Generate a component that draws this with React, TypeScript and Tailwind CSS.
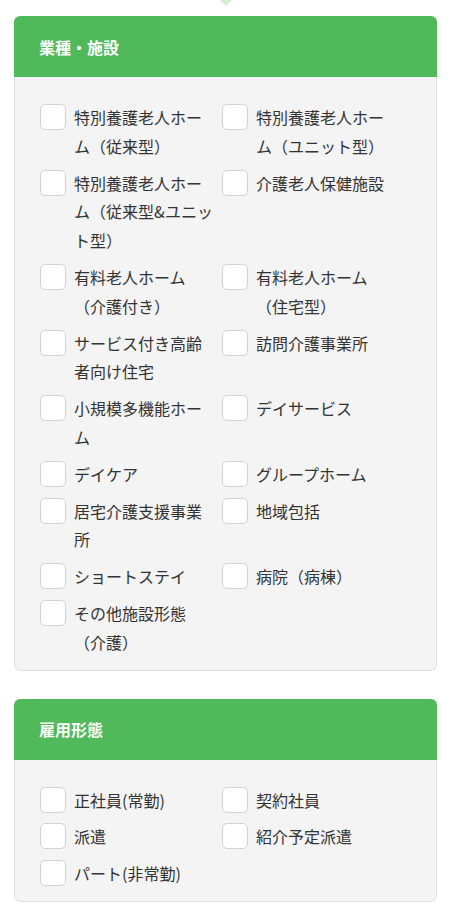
import React from "react";

const facilityTypes = [
  "特別養護老人ホーム（従来型）",
  "特別養護老人ホーム（ユニット型）",
  "特別養護老人ホーム（従来型&ユニット型）",
  "介護老人保健施設",
  "有料老人ホーム（介護付き）",
  "有料老人ホーム（住宅型）",
  "サービス付き高齢者向け住宅",
  "訪問介護事業所",
  "小規模多機能ホーム",
  "デイサービス",
  "デイケア",
  "グループホーム",
  "居宅介護支援事業所",
  "地域包括",
  "ショートステイ",
  "病院（病棟）",
  "その他施設形態（介護）",
];

const employmentTypes = ["正社員(常勤)", "契約社員", "派遣", "紹介予定派遣", "パート(非常勤)"];

function CheckItem({ label }: { label: string }) {
  return (
    <label className="flex items-start gap-2 cursor-pointer">
      <span className="h-[26px] w-[26px] shrink-0 rounded-[5px] border border-[#d2d2d2] bg-white" />
      <span className="w-[140px] -translate-y-px text-base leading-[1.8] text-[#333]">{label}</span>
    </label>
  );
}

function FilterCard({ title, items }: { title: string; items: string[] }) {
  return (
    <section className="overflow-hidden rounded-md">
      <div className="flex h-[61px] items-center bg-[#50b95a] px-[25px]">
        <h2 className="text-base font-bold text-white">{title}</h2>
      </div>
      <div className="rounded-b-md border-x border-b border-[#e0e0e0] bg-[#f4f4f4] pl-[25px] pr-4 pt-[27px] pb-3">
        <div className="grid grid-cols-[182px_182px] gap-y-2">
          {items.map((item) => (
            <CheckItem key={item} label={item} />
          ))}
        </div>
      </div>
    </section>
  );
}

export default function App() {
  return (
    <div className="min-h-screen bg-white px-[14px] pb-8 font-['Noto_Sans_CJK_JP',sans-serif]">
      <div className="flex h-4 justify-center">
        <div className="h-0 w-0 border-x-[6px] border-t-[6px] border-x-transparent border-t-[#d3edd3]" />
      </div>
      <FilterCard title="業種・施設" items={facilityTypes} />
      <div className="mt-[28px]">
        <FilterCard title="雇用形態" items={employmentTypes} />
      </div>
    </div>
  );
}
